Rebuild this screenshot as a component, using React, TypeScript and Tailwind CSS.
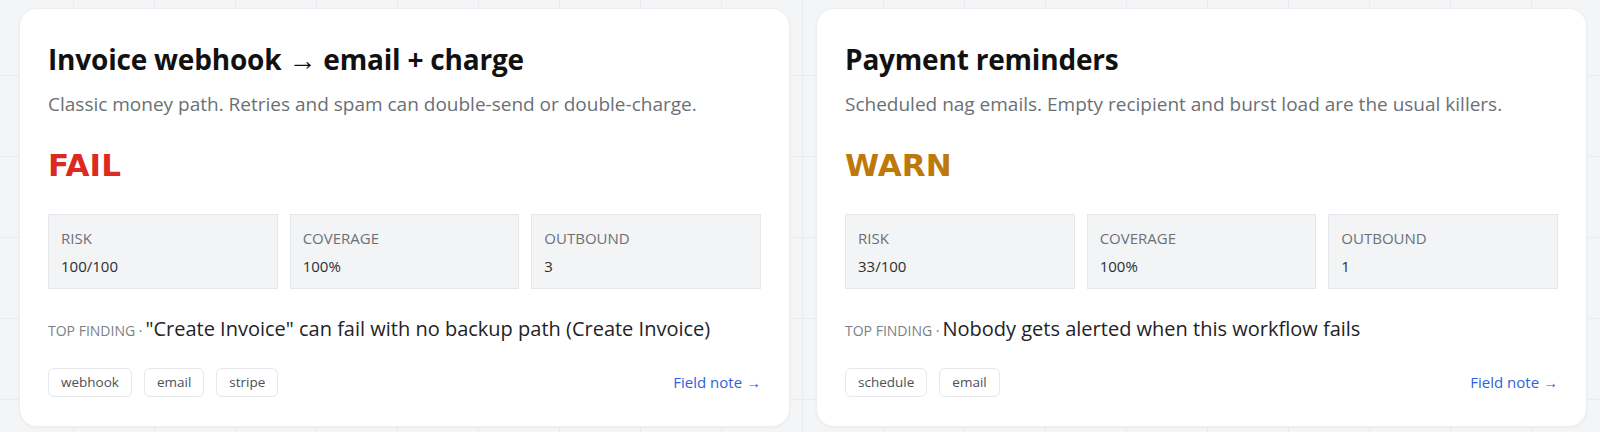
import React from "react";

type Stat = { label: string; value: string };
type CardData = {
  title: string;
  desc: string;
  status: "FAIL" | "WARN";
  stats: Stat[];
  finding: string;
  tags: string[];
};

const cards: CardData[] = [
  {
    title: "Invoice webhook → email + charge",
    desc: "Classic money path. Retries and spam can double-send or double-charge.",
    status: "FAIL",
    stats: [
      { label: "RISK", value: "100/100" },
      { label: "COVERAGE", value: "100%" },
      { label: "OUTBOUND", value: "3" },
    ],
    finding: "\"Create Invoice\" can fail with no backup path (Create Invoice)",
    tags: ["webhook", "email", "stripe"],
  },
  {
    title: "Payment reminders",
    desc: "Scheduled nag emails. Empty recipient and burst load are the usual killers.",
    status: "WARN",
    stats: [
      { label: "RISK", value: "33/100" },
      { label: "COVERAGE", value: "100%" },
      { label: "OUTBOUND", value: "1" },
    ],
    finding: "Nobody gets alerted when this workflow fails",
    tags: ["schedule", "email"],
  },
];

function Card({ c }: { c: CardData }) {
  return (
    <div className="rounded-[18px] border border-[#eceef1] bg-white px-[28px] pt-[28px] pb-[29px] shadow-[0_1px_3px_rgba(0,0,0,0.04)]">
      <h2 className="mt-[4px] text-[28px] font-bold leading-[36px] tracking-[-0.2px] text-[#111111]">{c.title}</h2>
      <p className="mt-[13px] text-[19px] leading-[28px] text-[#6b7075]">{c.desc}</p>
      <div
        className={
          "mt-[27px] font-['DejaVu_Sans',sans-serif] text-[31px] font-bold leading-[40px] " +
          (c.status === "FAIL" ? "text-[#dc2a22]" : "text-[#bd7a0b]")
        }
      >
        {c.status}
      </div>
      <div className="mt-[29px] grid grid-cols-3 gap-[12px]">
        {c.stats.map((s) => (
          <div key={s.label} className="h-[75px] border border-[#e4e6e9] bg-[#f3f4f6] px-[12px] pt-[13px]">
            <div className="text-[15px] leading-[20px] text-[#6b7075]">{s.label}</div>
            <div className="mt-[8px] text-[15px] leading-[20px] text-[#2b2f33]">{s.value}</div>
          </div>
        ))}
      </div>
      <div className="mt-[26px] flex items-baseline gap-[3px]">
        <span className="text-[14px] uppercase leading-[28px] text-[#7a7f85]">Top finding ·</span>
        <span className="text-[20px] leading-[28px] text-[#1f2326]">{c.finding}</span>
      </div>
      <div className="mt-[23px] flex items-center justify-between">
        <div className="flex gap-[12px]">
          {c.tags.map((t) => (
            <span
              key={t}
              className="flex h-[29px] items-center rounded-[6px] border border-[#e6e8eb] px-[12px] text-[13.5px] text-[#4b5055]"
            >
              {t}
            </span>
          ))}
        </div>
        <a className="text-[15px] text-[#2f5fe0]">Field note →</a>
      </div>
    </div>
  );
}

export default function App() {
  return (
    <div className="h-[432px] w-[1600px] overflow-hidden bg-[#f4f5f7] bg-[linear-gradient(to_right,#e9ebee_1px,transparent_1px),linear-gradient(to_bottom,#e9ebee_1px,transparent_1px)] bg-[size:81px_81px] bg-[position:73px_75px] font-['Open_Sans',sans-serif]">
      <div className="grid grid-cols-[771px_771px] gap-[26px] pl-[19px] pt-[8px]">
        {cards.map((c) => (
          <Card key={c.title} c={c} />
        ))}
      </div>
    </div>
  );
}
